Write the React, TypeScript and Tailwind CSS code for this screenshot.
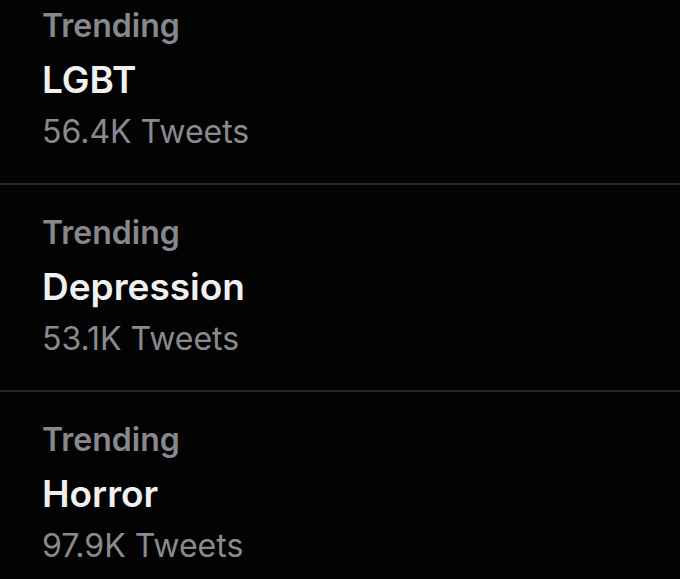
const trends = [
  { name: "LGBT", count: "56.4K" },
  { name: "Depression", count: "53.1K" },
  { name: "Horror", count: "97.9K" },
];

function TrendRow({ name, count }: { name: string; count: string }) {
  return (
    <div className="h-[207px] border-t-2 border-[#262628] pl-[42px] pt-[28px]">
      <div className="text-[32px] leading-[40px] font-semibold text-[#88888c]">Trending</div>
      <div className="mt-[12px] text-[37px] leading-[44px] font-semibold text-[#f0f0f0]">{name}</div>
      <div className="mt-[10px] text-[32px] leading-[40px] font-normal text-[#8a8a8e]">{count} Tweets</div>
    </div>
  );
}

export default function App() {
  return (
    <div
      className="h-[579px] w-[680px] overflow-hidden bg-[#030303]"
      style={{ fontFamily: "Inter, 'Noto Sans', sans-serif" }}
    >
      <div className="-mt-[24px]">
        {trends.map((t) => (
          <TrendRow key={t.name} name={t.name} count={t.count} />
        ))}
      </div>
    </div>
  );
}
